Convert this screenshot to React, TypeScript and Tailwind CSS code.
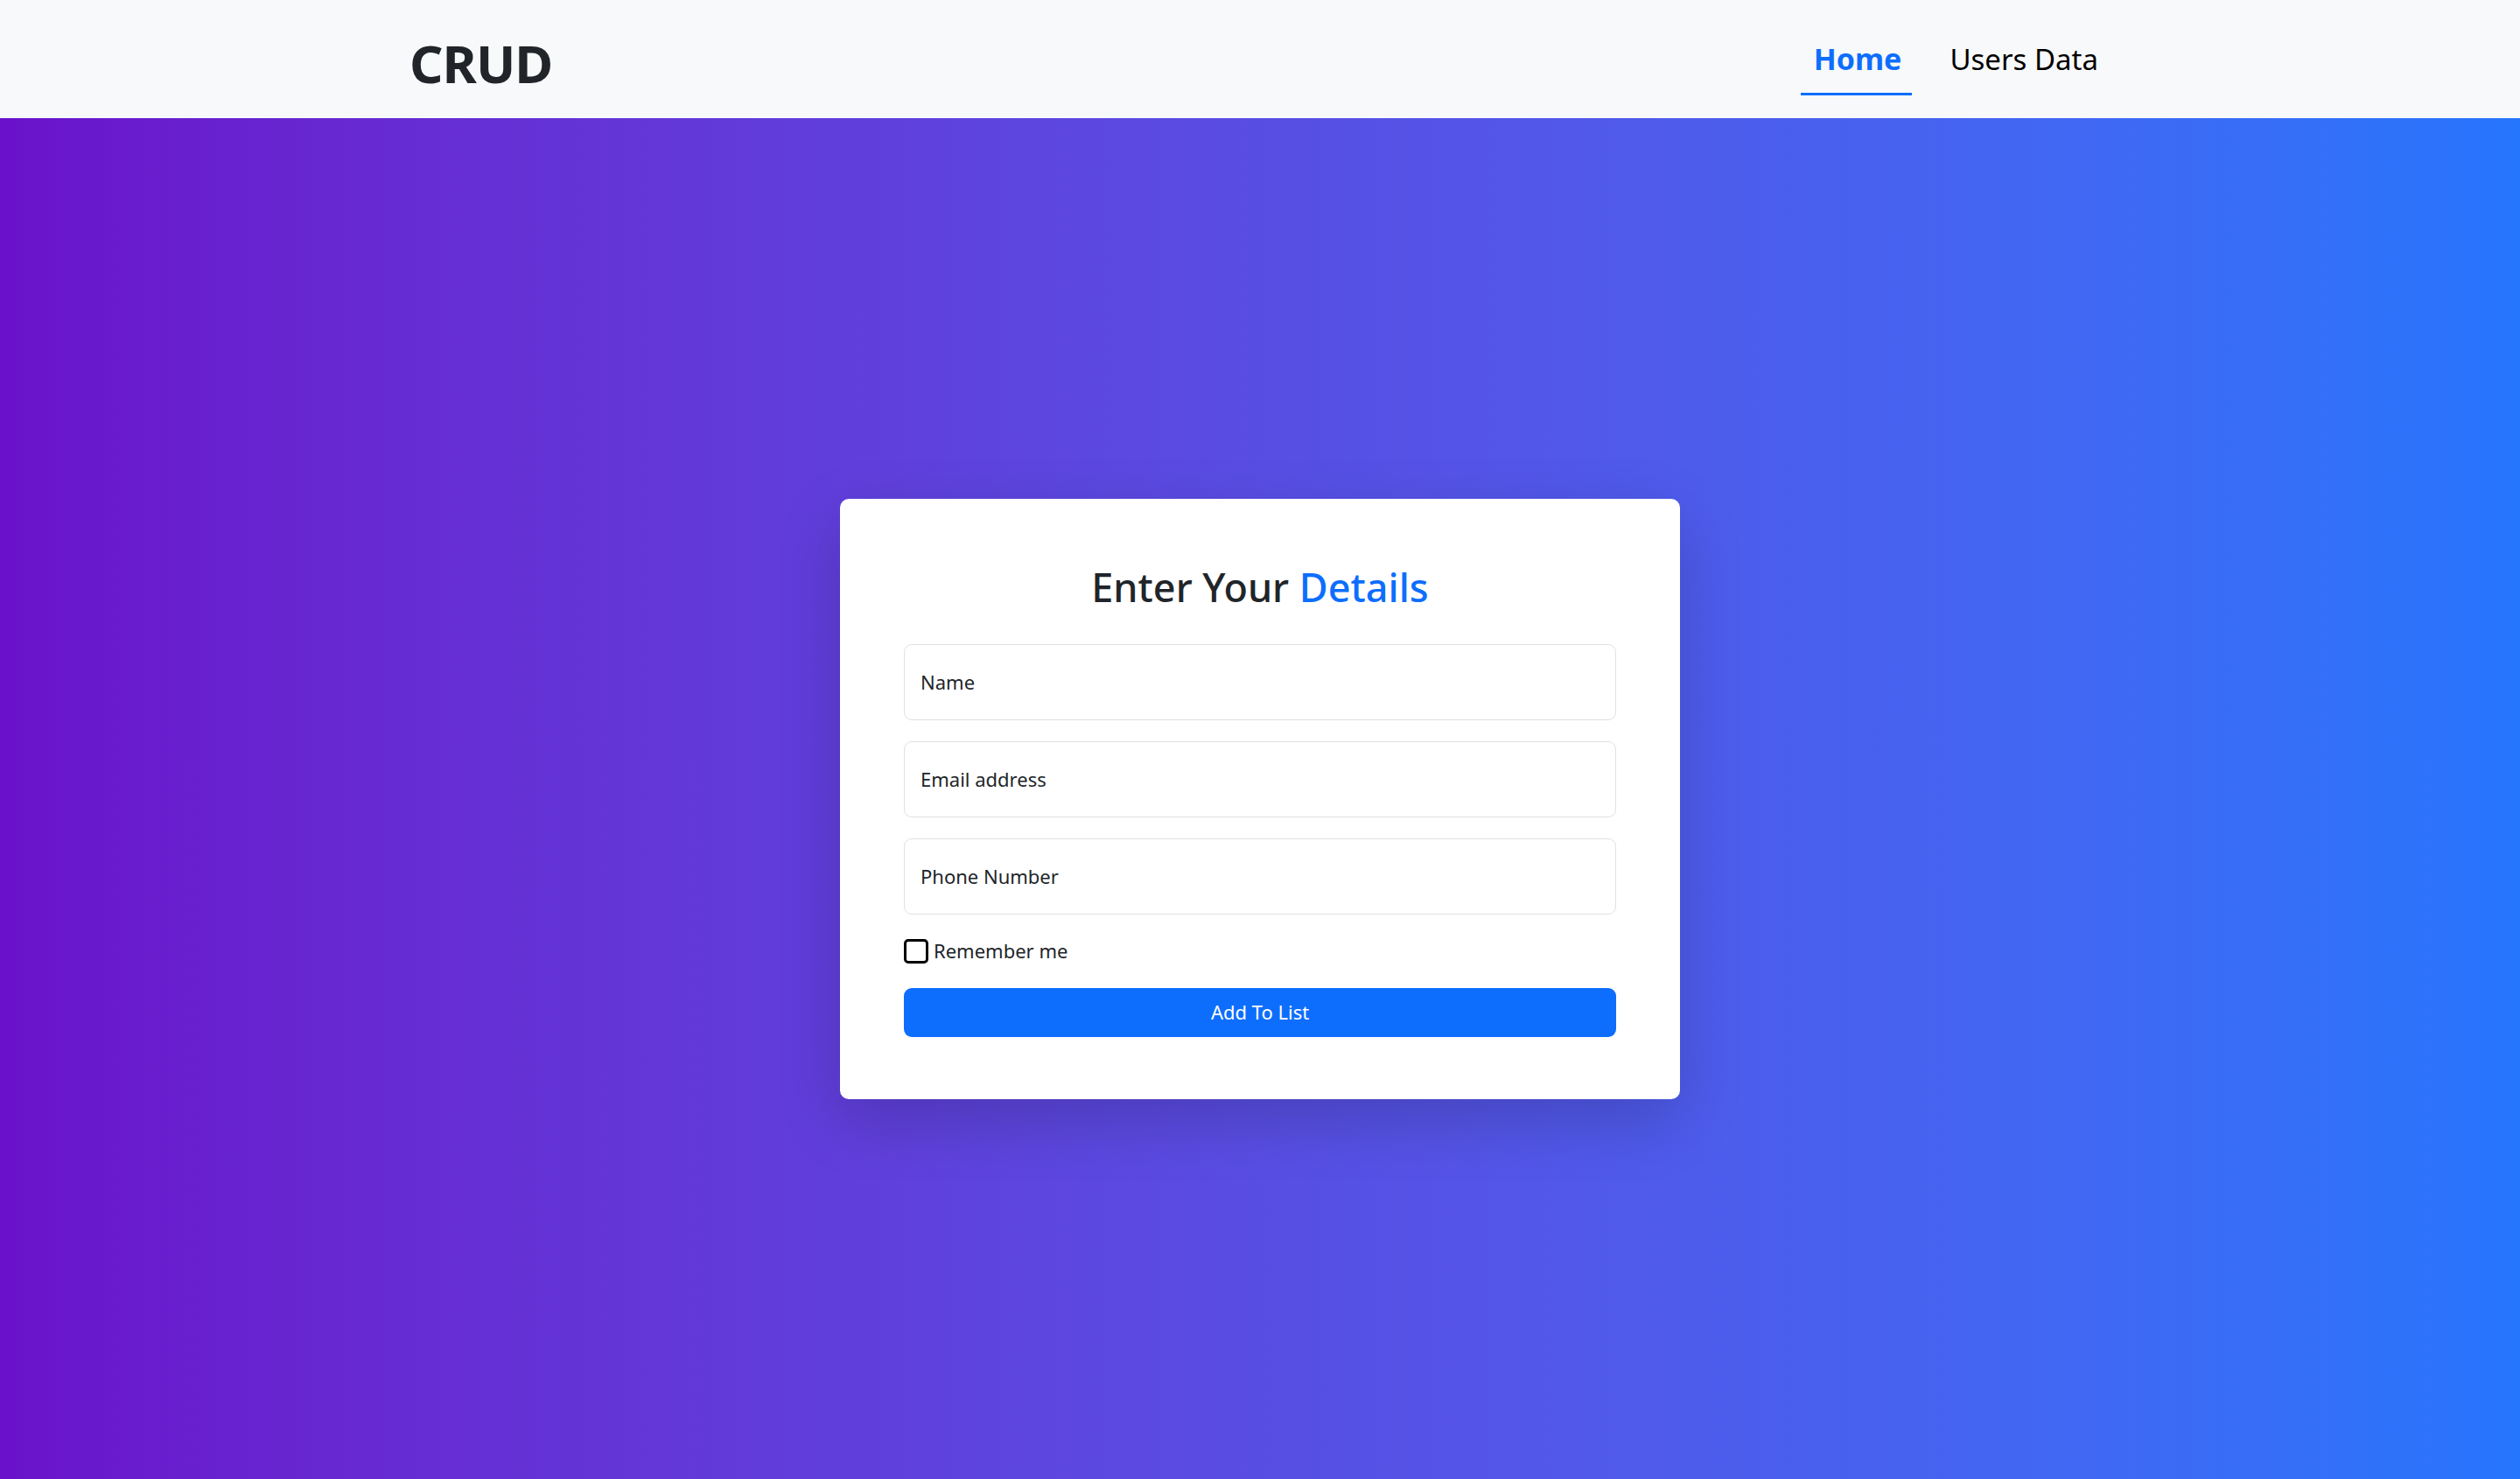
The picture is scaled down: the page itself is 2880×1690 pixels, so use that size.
import React from "react";

export default function App() {
  return (
    <div className="flex h-screen flex-col" style={{ fontFamily: '"Noto Sans", "Open Sans", sans-serif' }}>
      <nav className="h-[135px] shrink-0 bg-[#f8f9fa]">
        <div className="mx-auto flex h-full w-[1980px] items-center justify-between px-[18px]">
          <div className="mt-[8px] text-[60px] font-bold leading-none tracking-[-1px] text-[#212529]">CRUD</div>
          <div className="flex items-center gap-[28px]">
            <a className="flex h-[82px] items-center border-b-[3px] border-[#0d6efd] pl-[15px] pr-[12px] pt-[3px] text-[34px] font-bold text-[#0d6efd]">
              Home
            </a>
            <a className="flex h-[82px] items-center border-b-[3px] border-transparent pl-[15px] pr-[14px] pt-[3px] text-[33px] text-black">
              Users Data
            </a>
          </div>
        </div>
      </nav>
      <main className="flex flex-1 items-center justify-center bg-gradient-to-r from-[#6a11cb] to-[#2575fc]">
        <div className="w-[960px] rounded-[10px] bg-white px-[73px] pb-[71px] pt-[72px] shadow-[0_24px_72px_rgba(0,0,0,0.18)]">
          <h2 className="mb-[36px] text-center text-[45px] font-medium leading-[58px] text-[#212529]">
            Enter Your <span className="text-[#0d6efd]">Details</span>
          </h2>
          <div className="flex h-[87px] items-center rounded-[9px] border border-[#dee2e6] px-[18px] text-[22px] text-[#212529]">Name</div>
          <div className="mt-[24px] flex h-[87px] items-center rounded-[9px] border border-[#dee2e6] px-[18px] text-[22px] text-[#212529]">Email address</div>
          <div className="mt-[24px] flex h-[87px] items-center rounded-[9px] border border-[#dee2e6] px-[18px] text-[22px] text-[#212529]">Phone Number</div>
          <div className="mt-[24px] flex h-[36px] items-center gap-[6px] text-[22px] text-[#212529]">
            <span className="h-[28px] w-[28px] rounded-[5px] border-[3px] border-black bg-white" />
            <span>Remember me</span>
          </div>
          <button className="mt-[24px] flex h-[56px] w-full items-center justify-center rounded-[9px] bg-[#0d6efd] text-[22px] text-white">
            Add To List
          </button>
        </div>
      </main>
    </div>
  );
}
